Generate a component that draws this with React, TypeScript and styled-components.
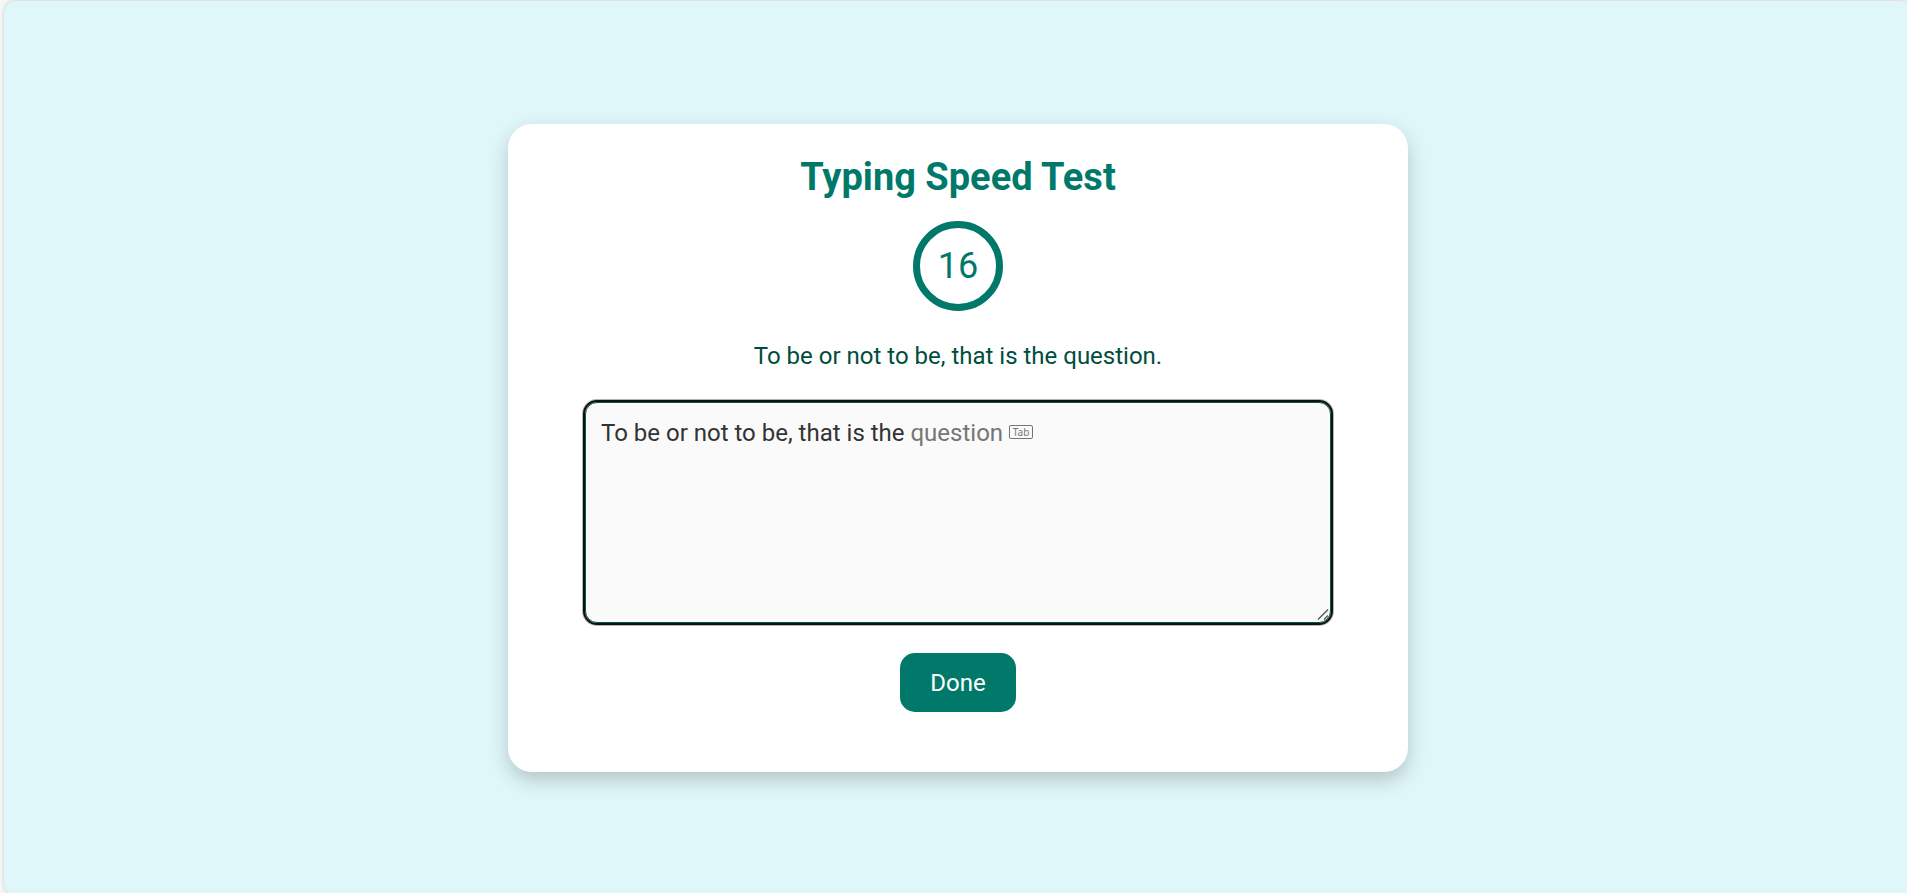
import React, { useState } from "react";
import styled, { createGlobalStyle } from "styled-components";

const GlobalStyle = createGlobalStyle`
  *, *::before, *::after { box-sizing: border-box; }
  html, body, #root { height: 100%; }
  body {
    margin: 0;
    overflow: hidden;
    background: #f7f7f7;
    font-family: Roboto, "Liberation Sans", sans-serif;
  }
`;

const Viewport = styled.div`
  display: flex;
  min-height: 100vh;
  overflow: hidden;
`;

const Page = styled.main`
  flex: 1;
  display: flex;
  align-items: center;
  justify-content: center;
  margin: 1px -5px -2px 4px;
  border-radius: 12px;
  background: #e0f7fa;
  box-shadow: 0 0 4px rgba(0, 0, 0, 0.2);
`;

const Card = styled.section`
  display: flex;
  flex-direction: column;
  align-items: center;
  width: 100%;
  max-width: 900px;
  padding: 29px 77px 60px;
  border-radius: 24px;
  background: #fff;
  box-shadow: 0 8px 20px rgba(0, 0, 0, 0.2);
`;

const Title = styled.h1`
  margin: 0 0 20px;
  color: #00796b;
  font-size: 38px;
  font-weight: 700;
  line-height: 48px;
`;

const Timer = styled.div`
  display: flex;
  align-items: center;
  justify-content: center;
  width: 90px;
  height: 90px;
  margin-bottom: 30px;
  border: 7px solid #00796b;
  border-radius: 50%;
  color: #00796b;
  font-size: 36px;
  line-height: 44px;
`;

const Prompt = styled.label`
  margin-bottom: 31px;
  color: #004d40;
  font-size: 24px;
  line-height: 30px;
`;

const Field = styled.div`
  position: relative;
  display: flex;
  width: 100%;
  margin-bottom: 30px;
`;

const Input = styled.textarea`
  width: 100%;
  height: 221px;
  padding: 16px 15px;
  border: 1px solid #00594f;
  border-radius: 12px;
  outline: 2px solid #101010;
  box-shadow: 0 0 0 3px #b4b4b4;
  background: #fafafa;
  color: #333;
  font: 24px/28px Roboto, "Liberation Sans", sans-serif;
  resize: vertical;

  &::-webkit-resizer {
    background: transparent;
  }
`;

const Grip = styled.svg`
  position: absolute;
  right: 2px;
  bottom: 2px;
  width: 13px;
  height: 13px;
  fill: none;
  stroke: #555;
  pointer-events: none;
`;

const Suggestion = styled.div`
  position: absolute;
  inset: 0;
  padding: 17px 16px;
  color: #757575;
  font-size: 24px;
  line-height: 28px;
  white-space: pre-wrap;
  pointer-events: none;
`;

const Typed = styled.span`
  visibility: hidden;
`;

const KeyHint = styled.kbd`
  display: inline-block;
  width: 24px;
  height: 14px;
  margin-left: 6px;
  border: 1px solid #757575;
  border-radius: 2px;
  font: 10px/12px "Noto Sans", sans-serif;
  text-align: center;
  vertical-align: 5px;
`;

const DoneButton = styled.button`
  padding: 16px 30px 14px;
  border: 0;
  border-radius: 15px;
  background: #00796b;
  color: #fff;
  font: 24px/29px Roboto, "Liberation Sans", sans-serif;
  cursor: pointer;
`;

const initialText = "To be or not to be, that is the ";

export default function App() {
  const [text, setText] = useState(initialText);

  return (
    <Viewport>
      <GlobalStyle />
      <Page>
        <Card>
          <Title>Typing Speed Test</Title>
          <Timer role="timer">16</Timer>
          <Prompt htmlFor="typing">To be or not to be, that is the question.</Prompt>
          <Field>
            <Input
              id="typing"
              value={text}
              spellCheck={false}
              onChange={(event) => setText(event.target.value)}
            />
            <Grip viewBox="0 0 13 13" aria-hidden="true">
              <path d="M2 11.5 12 1.5M8 11.5 12 7.5" strokeWidth="1.4" />
            </Grip>
            {text === initialText && (
              <Suggestion aria-hidden="true">
                <Typed>{text}</Typed>question<KeyHint>Tab</KeyHint>
              </Suggestion>
            )}
          </Field>
          <DoneButton type="button">Done</DoneButton>
        </Card>
      </Page>
    </Viewport>
  );
}
